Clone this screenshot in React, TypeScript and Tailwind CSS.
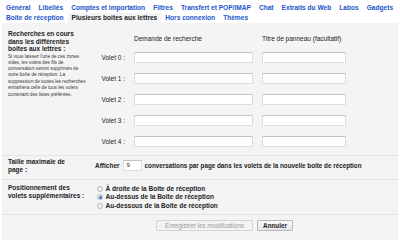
const tabsRow1 = [
  "Général",
  "Libellés",
  "Comptes et importation",
  "Filtres",
  "Transfert et POP/IMAP",
  "Chat",
  "Extraits du Web",
  "Labos",
  "Gadgets",
];

const tabsRow2 = [
  { name: "Boîte de réception" },
  { name: "Plusieurs boites aux lettres", active: true },
  { name: "Hors connexion" },
  { name: "Thèmes" },
];

const volets = [0, 1, 2, 3, 4];

const helpLines = [
  "Si vous laissez l'une de ces zones",
  "vides, les volets des fils de",
  "conversation seront supprimés de",
  "votre boîte de réception. La",
  "suppression de toutes les recherches",
  "entraînera celle de tous les volets",
  "contenant des listes préférées.",
];

const positions = [
  { label: "À droite de la Boîte de réception", checked: false },
  { label: "Au-dessus de la Boîte de réception", checked: true },
  { label: "Au-dessous de la Boîte de réception", checked: false },
];

function Radio({ checked }: { checked: boolean }) {
  return (
    <span className="w-[6px] h-[6px] rounded-full border border-[#b8b8b8] bg-[#f2f2f2] flex items-center justify-center flex-shrink-0">
      {checked && <span className="w-[3px] h-[3px] rounded-full bg-[#3a6fd8]" />}
    </span>
  );
}

function TextBox({ w, value }: { w: string; value?: string }) {
  return (
    <div
      className={`${w} h-[11px] flex-shrink-0 bg-white border border-[#dcdcdc] border-t-[#c4c4c4] text-[6px] leading-[9px] pl-[3px] text-[#222] font-normal`}
    >
      {value}
    </div>
  );
}

export default function App() {
  return (
    <div className="w-[400px] h-[240px] bg-white overflow-hidden font-['Liberation_Sans',Arial,sans-serif] text-[#222]">
      {/* Tabs */}
      <div className="pt-[3px] pl-[2px] text-[6.6px] font-bold leading-[10px] whitespace-nowrap">
        <div className="flex h-[10px] items-center">
          {tabsRow1.map((t) => (
            <span key={t} className="px-[4px] flex-shrink-0 text-[#2255cc]">
              {t}
            </span>
          ))}
        </div>
        <div className="flex h-[10px] items-stretch">
          {tabsRow2.map((t) => (
            <span
              key={t.name}
              className={
                t.active
                  ? "px-[4px] flex-shrink-0 flex items-center bg-[#f4f4f4] text-[#222]"
                  : "px-[4px] flex-shrink-0 flex items-center text-[#2255cc]"
              }
            >
              {t.name}
            </span>
          ))}
        </div>
      </div>

      {/* Panel */}
      <div className="mx-[2px] bg-[#f4f4f4] h-[217px] text-[6.5px]">
        {/* Recherches */}
        <div className="flex pt-[7px] pb-[8px] border-b border-[#e4e4e4]">
          <div className="w-[86px] ml-[6px] flex-shrink-0">
            <div className="font-bold leading-[7.7px]">
              Recherches en cours
              <br />
              dans les différentes
              <br />
              boites aux lettres :
            </div>
            <div className="w-[110px] h-[44px] text-[6px] leading-[8.1px] text-[#333] whitespace-nowrap scale-[0.78] origin-top-left">
              {helpLines.map((l) => (
                <div key={l}>{l}</div>
              ))}
            </div>
          </div>
          <div className="mt-[5px]">
            <div className="grid grid-cols-[31px_119px_84px] gap-x-[9px] leading-[8px] mb-[9px]">
              <span />
              <span>Demande de recherche</span>
              <span>Titre de panneau (facultatif)</span>
            </div>
            <div className="grid grid-cols-[31px_119px_84px] gap-x-[9px] gap-y-[10px] items-center">
              {volets.map((v) => (
                <div key={v} className="contents">
                  <span className="text-right leading-[8px] whitespace-nowrap">Volet {v} :</span>
                  <TextBox w="w-[119px]" />
                  <TextBox w="w-[84px]" />
                </div>
              ))}
            </div>
          </div>
        </div>

        {/* Taille maximale */}
        <div className="flex items-center pt-[2px] pb-[6px] border-b border-[#e4e4e4]">
          <div className="w-[86px] ml-[6px] flex-shrink-0 font-bold leading-[7.7px]">
            Taille maximale de
            <br />
            page :
          </div>
          <div className="ml-[1px] flex items-center gap-[3px] font-bold whitespace-nowrap">
            <span>Afficher</span>
            <TextBox w="w-[19px]" value="9" />
            <span className="text-[6.3px]">
              conversations par page dans les volets de la nouvelle boîte de réception
            </span>
          </div>
        </div>

        {/* Positionnement */}
        <div className="flex pt-[4px] pb-[4.5px] border-b border-[#e4e4e4]">
          <div className="w-[86px] ml-[6px] flex-shrink-0 font-bold leading-[7.7px]">
            Positionnement des
            <br />
            volets supplémentaires :
          </div>
          <div className="ml-[3px] flex flex-col font-bold whitespace-nowrap">
            {positions.map((p) => (
              <div key={p.label} className="h-[8.5px] flex items-center gap-[2.5px]">
                <Radio checked={p.checked} />
                <span>{p.label}</span>
              </div>
            ))}
          </div>
        </div>

        {/* Buttons */}
        <div className="flex gap-[4px] pt-[5px] pl-[154px]">
          <button className="h-[11px] px-[8px] border border-[#d4d4d4] rounded-[1px] bg-[#f3f3f3] text-[#9a9a9a] text-[6.3px] leading-[9px] whitespace-nowrap">
            Enregistrer les modifications
          </button>
          <button className="h-[11px] px-[5px] border border-[#b8b8b8] rounded-[1px] bg-gradient-to-b from-[#fafafa] to-[#e6e6e6] text-[#222] font-bold text-[6.3px] leading-[9px]">
            Annuler
          </button>
        </div>
      </div>
    </div>
  );
}
